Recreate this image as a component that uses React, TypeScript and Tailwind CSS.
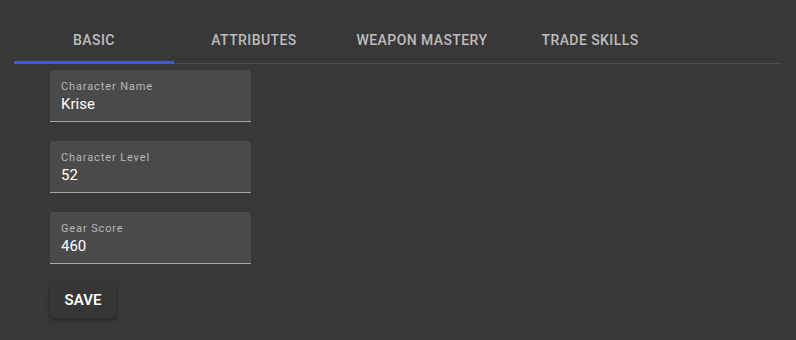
import { useState } from "react"

const tabs = [
  { label: "BASIC", w: "w-[160px]" },
  { label: "ATTRIBUTES", w: "w-[160px]" },
  { label: "WEAPON MASTERY", w: "w-[176px]" },
  { label: "TRADE SKILLS", w: "w-[160px]" },
]

function Field({ label, value }: { label: string; value: string }) {
  return (
    <div className="w-[201px] h-[52px] bg-[#4a4a4a] rounded-t-[4px] border-b border-[#a8a8a8] px-[11px] pt-[10px]">
      <div className="text-[11px] leading-[14px] tracking-[0.08em] text-[#b8b8b8]">{label}</div>
      <div className="text-[15px] leading-[18px] mt-[1px] text-white">{value}</div>
    </div>
  )
}

export default function App() {
  const [active, setActive] = useState(0)

  return (
    <main className="w-[796px] h-[340px] bg-[#383838] overflow-hidden font-['Roboto',sans-serif] pt-[16px] px-[14px]">
      <div className="flex h-[48px] border-b border-[#4c4c4c]">
        {tabs.map((t, i) => (
          <button
            key={t.label}
            onClick={() => setActive(i)}
            className={`${t.w} relative flex items-center justify-center pt-[2px] text-[14px] font-medium tracking-[0.03em] text-[#bdbdbd]`}
          >
            {t.label}
            {active === i && <span className="absolute left-0 right-0 bottom-[-1px] h-[3px] bg-[#3f5ccc]" />}
          </button>
        ))}
      </div>
      <div className="pl-[36px] pt-[6px] flex flex-col gap-[19px]">
        <Field label="Character Name" value="Krise" />
        <Field label="Character Level" value="52" />
        <Field label="Gear Score" value="460" />
        <button className="w-[66px] h-[35px] bg-[#363636] rounded-[4px] shadow-[0_2px_4px_rgba(0,0,0,0.35)] text-[15px] font-semibold text-white">
          SAVE
        </button>
      </div>
    </main>
  )
}
